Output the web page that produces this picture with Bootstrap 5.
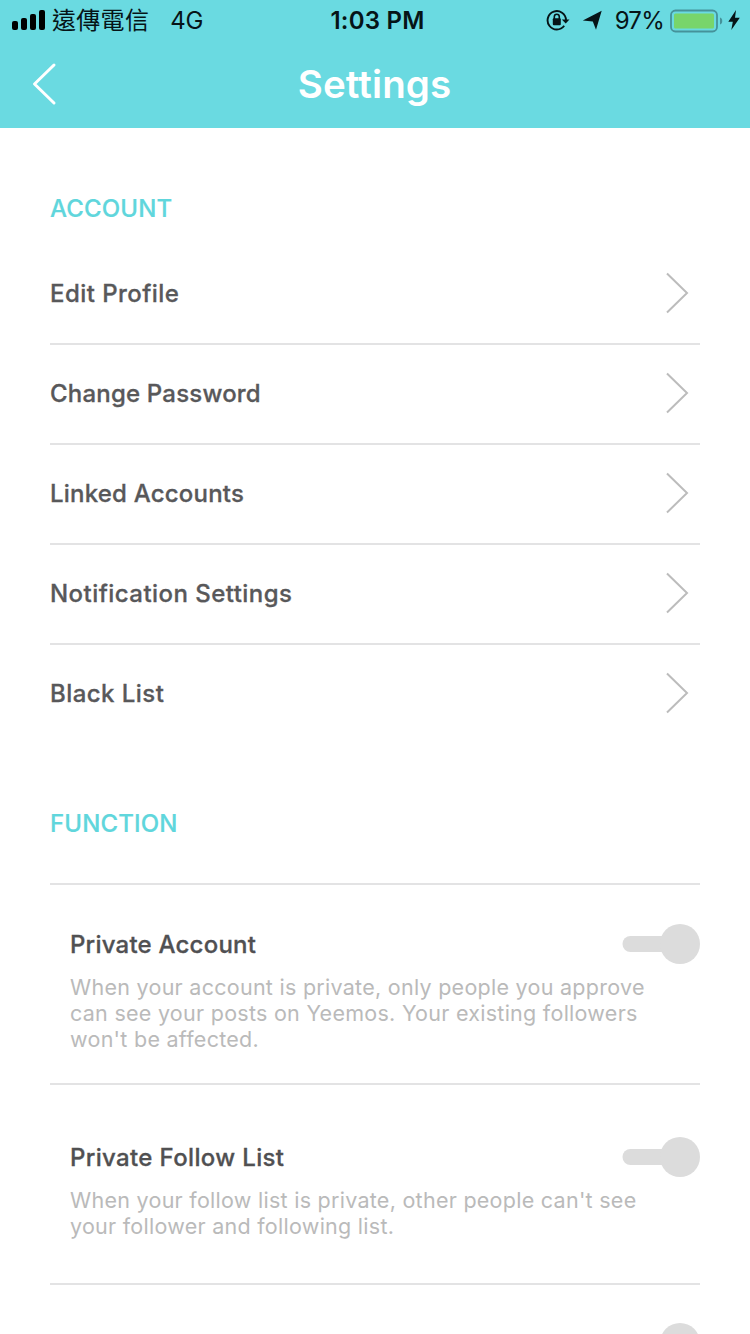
<!DOCTYPE html>
<html lang="en">
<head>
<meta charset="utf-8">
<meta name="viewport" content="width=device-width, initial-scale=1">
<title>Settings</title>
<link rel="stylesheet" href="https://cdn.jsdelivr.net/npm/bootstrap@5.3.0/dist/css/bootstrap.min.css">
<style>
  body { font-family: Inter, "Noto Sans CJK TC", sans-serif; height: 1334px; color: #58585a; }
  svg { display: block; flex: none; }
  .app-top { background: #6adae1; height: 128px; }
  .status-row { height: 40px; font-size: 24px; line-height: 40px; color: #061417; padding: 0 10px 0 12px; }
  .status-row span { padding-top: 2px; }
  .status-side { width: 290px; white-space: nowrap; }
  .carrier { font-size: 24px; margin-left: 6px; letter-spacing: .3px; }
  .network { margin-left: 21px; letter-spacing: -.3px; }
  .clock { font-weight: 600; letter-spacing: .2px; padding-left: 3px; }
  .charge { letter-spacing: -.75px; margin-left: 13px; }
  .title-row { height: 88px; padding: 0 31px 0 30px; }
  .title-text { font-size: 38.5px; font-weight: 600; line-height: 88px; letter-spacing: .1px; }
  .page-body { padding: 0 50px; height: 1206px; }
  .section-title { font-size: 24px; font-weight: 500; line-height: 30px; color: #60d6dc; letter-spacing: .15px; margin: 0; -webkit-text-stroke: .2px; }
  .list-group { --bs-list-group-border-radius: 0; }
  .nav-item-row { height: 100px; padding: 0 11px 1px 0; border: 0; border-bottom: 2px solid #e3e3e4; font-size: 24px; font-weight: 500; letter-spacing: .45px; color: #58585a; -webkit-text-stroke: .3px; }
  .nav-item-row svg { margin-bottom: 2px; }
  .nav-item-row:last-child { border-bottom-color: transparent; }
  .track-tight { letter-spacing: .2px; }
  .option-row { height: 200px; border-top: 2px solid #e3e3e4; padding-left: 20px; }
  .option-row:last-child { height: auto; }
  .option-name { font-size: 24px; font-weight: 500; line-height: 30px; letter-spacing: .35px; color: #505052; margin: 0; padding-top: 2px; -webkit-text-stroke: .3px; }
  .option-name.track-tight { letter-spacing: .22px; }
  .option-note { font-size: 21.5px; line-height: 26px; letter-spacing: .27px; color: #bababa; margin: 0; }
</style>
</head>
<body class="bg-white overflow-hidden">
<svg width="0" height="0" class="position-absolute" aria-hidden="true">
  <symbol id="chevron" viewBox="0 0 24 42"><path d="M2 1.5 22 21 2 40.500" fill="none" stroke="#bcbcbc" stroke-width="2"/></symbol>
  <symbol id="toggle" viewBox="0 0 78 40"><rect x="0.500" y="12" width="56" height="16" rx="8" fill="#dcdcdc"/><circle cx="58" cy="20" r="20" fill="#dcdcdc"/></symbol>
</svg>

<header class="app-top">
  <div class="status-row d-flex align-items-center justify-content-between">
    <div class="status-side d-flex align-items-center">
      <svg width="34" height="20" viewBox="0 0 34 20" fill="#000"><rect x="0" y="11" width="6" height="9" rx="2"/><rect x="9" y="8" width="6" height="12" rx="2"/><rect x="18" y="4" width="6" height="16" rx="2"/><rect x="27" y="0" width="6" height="20" rx="2"/></svg>
      <span class="carrier">遠傳電信</span>
      <span class="network">4G</span>
    </div>
    <span class="clock">1:03 PM</span>
    <div class="status-side d-flex align-items-center justify-content-end">
      <svg width="24" height="22" viewBox="0 0 24 22"><path d="M18.200 16.800A9.200 9.200 0 1 1 20 11" fill="none" stroke="#061417" stroke-width="1.900"/><path d="M15.800 10.500h7.700l-3.800 4z" fill="#061417"/><rect x="6.800" y="9.300" width="8" height="7" rx="1" fill="#061417"/><path d="M8.300 10V7.800a2.500 2.600 0 0 1 5 0V10" fill="none" stroke="#061417" stroke-width="1.600"/></svg>
      <svg width="20" height="20" viewBox="0 0 20 20" style="margin-left:12px"><path d="M19.700.8 14 19.700 10.800 11.500.8 10.600z" fill="#061417"/></svg>
      <span class="charge">97%</span>
      <svg width="54" height="24" viewBox="0 0 54 24" style="margin:1px 0 0 6px"><rect x="1" y="1.500" width="46" height="21" rx="4.500" fill="none" stroke="#45929a" stroke-width="1.800"/><rect x="4" y="4.500" width="40" height="15" rx="1.500" fill="#78d56b"/><path d="M50 8.500c3 .8 3 6.200 0 7z" fill="#45929a"/></svg>
      <svg width="12" height="20" viewBox="0 0 12 20" style="margin-left:4px"><path d="M8 0 .3 11.700h4.500L3.300 20 11.800 7.800H7z" fill="#061417"/></svg>
    </div>
  </div>
  <div class="title-row d-flex align-items-center justify-content-between">
    <svg width="28" height="44" viewBox="0 0 28 44"><path d="M24 3 4.500 22 24 41" fill="none" stroke="#fff" stroke-width="3" stroke-linecap="round" stroke-linejoin="round"/></svg>
    <h1 class="title-text text-white m-0">Settings</h1>
    <span style="width:28px"></span>
  </div>
</header>

<main class="page-body overflow-hidden">
  <h2 class="section-title" style="padding-top:66px">ACCOUNT</h2>
  <div class="list-group" style="margin-top:21px">
    <a class="nav-item-row list-group-item d-flex align-items-center justify-content-between" href="#">Edit Profile<svg width="24" height="42"><use href="#chevron"/></svg></a>
    <a class="nav-item-row track-tight list-group-item d-flex align-items-center justify-content-between" href="#">Change Password<svg width="24" height="42"><use href="#chevron"/></svg></a>
    <a class="nav-item-row track-tight list-group-item d-flex align-items-center justify-content-between" href="#">Linked Accounts<svg width="24" height="42"><use href="#chevron"/></svg></a>
    <a class="nav-item-row list-group-item d-flex align-items-center justify-content-between" href="#">Notification Settings<svg width="24" height="42"><use href="#chevron"/></svg></a>
    <a class="nav-item-row list-group-item d-flex align-items-center justify-content-between" href="#">Black List<svg width="24" height="42"><use href="#chevron"/></svg></a>
  </div>

  <h2 class="section-title" style="padding-top:64px">FUNCTION</h2>
  <div style="margin-top:44px">
    <section class="option-row" style="padding-top:39px">
      <div class="d-flex align-items-center justify-content-between"><h3 class="option-name track-tight">Private Account</h3><svg width="78" height="40"><use href="#toggle"/></svg></div>
      <p class="option-note" style="margin-top:10px">When your account is private, only people you approve<br>can see your posts on Yeemos. Your existing followers<br>won't be affected.</p>
    </section>
    <section class="option-row" style="padding-top:52px">
      <div class="d-flex align-items-center justify-content-between"><h3 class="option-name">Private Follow List</h3><svg width="78" height="40"><use href="#toggle"/></svg></div>
      <p class="option-note" style="margin-top:10px">When your follow list is private, other people can't see<br>your follower and following list.</p>
    </section>
    <section class="option-row" style="padding-top:38px">
      <div class="d-flex justify-content-end overflow-hidden" style="height:11px"><svg width="78" height="40"><use href="#toggle"/></svg></div>
    </section>
  </div>
</main>
<script src="https://cdn.jsdelivr.net/npm/bootstrap@5.3.0/dist/js/bootstrap.bundle.min.js"></script>
</body>
</html>
